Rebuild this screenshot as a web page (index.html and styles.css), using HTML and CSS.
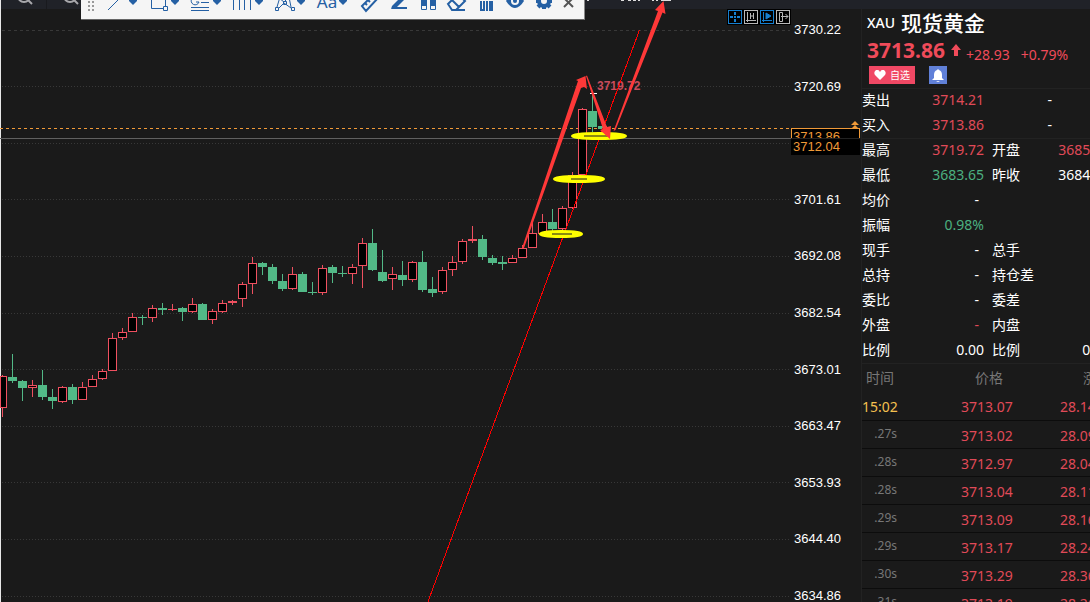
FILE: index.html
```html
<!DOCTYPE html>
<html lang="zh-CN">

<head>
    <meta charset="UTF-8">
    <meta name="viewport" content="width=device-width, initial-scale=1.0">
    <title>XAU 现货黄金</title>
    <link rel="stylesheet" href="styles.css">
</head>

<body>
    <header class="strip">
        <button type="button" aria-label="放大"><svg width="46" height="9"><circle cx="24" cy="-4" r="6" /><path d="M28 0l4 4" /></svg></button>
        <button type="button" aria-label="缩小"><svg width="46" height="9"><circle cx="23" cy="-4" r="6" /><path d="M27 0l4 4" /></svg></button>
        <svg class="strip_marks" width="90" height="9"><path d="M2 0h2M36 0h3M43 0h3M48 0h3M53 0h2M67 0h2M71 0h2M76 0h10" /></svg>
    </header>

    <div class="toolbar">
        <svg class="grip" width="22" height="24"><path d="M7 12h2M11 12h2M7 16h2M11 16h2M7 20h2M11 20h2" /></svg>
        <button type="button" aria-label="线段"><svg width="42" height="24"><path d="M5 20L19 6" /><path class="fill" d="M26 8h8v3l-4 4-4-4z" /></svg></button>
        <button type="button" aria-label="矩形"><svg width="42" height="24"><path d="M6.500 4v14.500h12M20.500 4v12M18.500 16.500h4v4h-4z" /><path class="fill" d="M26 8h8v3l-4 4-4-4z" /></svg></button>
        <button type="button" aria-label="黄金分割"><svg width="42" height="24"><path d="M11 8a4 4 0 1 0 1 4h-3M14 12.500h8M4 17.500h18M4 20.500h18" /><path class="fill" d="M26 8h8v3l-4 4-4-4z" /></svg></button>
        <button type="button" aria-label="周期线"><svg width="42" height="24"><path d="M4.500 4v16M10.500 4v16M15.500 4v16M21.500 4v16" /><path class="fill" d="M26 8h8v3l-4 4-4-4z" /></svg></button>
        <button type="button" aria-label="形态"><svg width="42" height="24"><path d="M6 17L9 7M20 17L18 7M8 18l5-5 7 5M8 8l5 4 5-5M4.500 17.500h3v3h-3zM20.500 17.500h3v3h-3zM12.500 11.500h3v3h-3z" /><path class="fill" d="M26 8h8v3l-4 4-4-4z" /></svg></button>
        <button type="button" class="text_tool" aria-label="文字"><span>Aa</span><svg width="20" height="24"><path class="fill" d="M4 8h8v3l-4 4-4-4z" /></svg></button>
        <button type="button" aria-label="测量"><svg class="bold" width="29" height="24"><path d="M7 16L19 4l4 4-12 13zM10 13l2 2M13 10l2 2M16 7l2 2" /></svg></button>
        <button type="button" aria-label="画笔"><svg width="29" height="24"><path class="fill" d="M8 16L20 4l3 3-11 11-5 1z" /><path class="thick" d="M8 18h15" /></svg></button>
        <button type="button" aria-label="布局"><svg width="29" height="24"><path d="M8.500 5v14.500h5V5M17.500 5v14.500h5V5" /><path class="fill" d="M8 4h6v12H8zM17 4h6v12h-6z" /></svg></button>
        <button type="button" aria-label="橡皮"><svg class="bold" width="29" height="24"><path d="M6 14L16 4l7 7-9 9h-4zM10 10l7 7M12 20h11" /></svg></button>
        <button type="button" aria-label="删除"><svg width="29" height="24"><path class="thick" d="M10 11v9h3v-9M16 11v10M22 20h-3v-9M21 11v10" /></svg></button>
        <button type="button" aria-label="显示"><svg width="29" height="24"><path class="fill" d="M6 11q9-14 18 0-9 14-18 0z" /><circle class="hole" cx="15" cy="11" r="4" /><circle class="fill" cx="15" cy="11" r="2" /></svg></button>
        <button type="button" aria-label="设置"><svg width="29" height="24"><circle class="gear" cx="15" cy="11" r="5" /><path class="cogs" d="M15 3v3M15 16v3M7 11h3M20 11h3M9 5l2 2M19 15l2 2M21 5l-2 2M11 15l-2 2" /></svg></button>
        <button type="button" class="close" aria-label="关闭"><svg width="26" height="24"><path d="M6 8l9 9M15 8l-9 9" /></svg></button>
    </div>

    <main>
        <section class="chart">
            <svg id="graph" viewBox="0 9 790 593" preserveAspectRatio="xMaxYMin meet" role="img" aria-label="K线图">
                <g id="grid"></g>
                <path class="current" d="M0 128.500H791" />
                <path class="cross" d="M0 138.500H791" />
                <g id="candles"></g>
                <path class="high_mark" d="M590 93.500h7" />
                <text class="high_text" x="597" y="90">3719.72</text>
                <path class="trend" d="M639.500 30L427.500 603" />
                <g class="levels">
                    <ellipse cx="599" cy="136" rx="26" ry="2" />
                    <ellipse cx="579" cy="179" rx="24" ry="2" />
                    <ellipse cx="561" cy="234" rx="20" ry="2" />
                    <path d="M584 136h25M571 179h16M552 234h20" />
                </g>
                <g class="arrows">
                    <path d="M522 248L578 81L576 80L585.500 76L587 89L584 87L581 88L524 248Z" />
                    <path d="M586 76L587 75.500L607 127L611 126L610 139L600 130L603 129Z" />
                    <path d="M613.500 131L658 11L655 10L663.500 1L665.500 14L662.500 12.500L615.500 130Z" />
                </g>
            </svg>
            <div class="chart_tools">
                <button type="button" class="blue" aria-label="十字光标"><svg width="14" height="14"><path class="plus" d="M7 2v3M7 9v3M2 7h3M9 7h3M6 7h2" /></svg></button>
                <button type="button" aria-label="坐标"><svg width="14" height="14"><path d="M3.500 2v10M2 10.500h10M6.500 3v6M9.500 3v6M7 6h3" /></svg></button>
                <button type="button" class="blue" aria-label="回放"><svg width="14" height="14"><path d="M3.500 2v10M2 10.500h10" /><path class="play" d="M6 3l5 3-5 3z" /></svg></button>
                <button type="button" aria-label="右移"><svg width="14" height="14"><path d="M3.500 2.500h3v9h-3zM5 6.500h7M9.500 4l2.500 2.500-2.500 2.500" /></svg></button>
            </div>
        </section>

        <aside class="axis">
            <ol>
                <li>3730.22</li>
                <li>3720.69</li>
                <li class="covered"></li>
                <li>3701.61</li>
                <li>3692.08</li>
                <li>3682.54</li>
                <li>3673.01</li>
                <li>3663.47</li>
                <li>3653.93</li>
                <li>3644.40</li>
                <li>3634.86</li>
            </ol>
            <div class="tag tag_price">3713.86</div>
            <div class="tag tag_cross">3712.04</div>
            <svg class="tag_arrow" width="8" height="8"><path d="M0 4l4-4 4 4zM0 8l4-4 4 4z" /></svg>
        </aside>

        <section class="quote">
            <h1><span>XAU</span> 现货黄金</h1>
            <div class="last">
                <strong>3713.86</strong>
                <svg width="10" height="12"><path d="M5 0l5 6H7v6H3V6H0z" /></svg>
                <span>+28.93</span>
                <span class="percent">+0.79%</span>
            </div>
            <div class="actions">
                <button type="button" class="favorite"><svg width="12" height="10"><path d="M6 10L1 5C-1 2 2-1 4 0q1 0 2 2 1-2 2-2c2-1 5 2 3 5z" /></svg>自选</button>
                <button type="button" class="alert" aria-label="提醒"><svg width="12" height="13"><path d="M6 0l1 1q3 1 3 5v3l2 2H0l2-2V6q0-4 3-5zM4 12h4l-2 1z" /></svg></button>
            </div>

            <table class="details">
                <colgroup><col class="c1"><col class="c2"><col class="c3"><col class="c4"></colgroup>
                <tbody>
                    <tr><th>卖出</th><td class="up">3714.21</td><td>-</td><td></td></tr>
                    <tr class="line"><th>买入</th><td class="up">3713.86</td><td>-</td><td></td></tr>
                    <tr><th>最高</th><td class="up">3719.72</td><th>开盘</th><td class="up">3685.20</td></tr>
                    <tr><th>最低</th><td class="down">3683.65</td><th>昨收</th><td>3684.93</td></tr>
                    <tr><th>均价</th><td class="empty">-</td><th></th><td></td></tr>
                    <tr><th>振幅</th><td class="down">0.98%</td><th></th><td></td></tr>
                    <tr><th>现手</th><td class="empty">-</td><th>总手</th><td></td></tr>
                    <tr><th>总持</th><td class="empty">-</td><th>持仓差</th><td></td></tr>
                    <tr><th>委比</th><td class="empty">-</td><th>委差</th><td></td></tr>
                    <tr><th>外盘</th><td class="empty up">-</td><th>内盘</th><td></td></tr>
                    <tr class="line"><th>比例</th><td>0.00</td><th>比例</th><td>0.00</td></tr>
                </tbody>
            </table>

            <table class="ticks">
                <colgroup><col class="t1"><col class="t2"><col class="t3"></colgroup>
                <thead>
                    <tr><th>时间</th><th>价格</th><th>涨跌</th></tr>
                </thead>
                <tbody>
                    <tr><td class="minute">15:02</td><td>3713.07</td><td>28.14</td></tr>
                    <tr><td>.27s</td><td>3713.02</td><td>28.09</td></tr>
                    <tr><td>.28s</td><td>3712.97</td><td>28.04</td></tr>
                    <tr><td>.28s</td><td>3713.04</td><td>28.11</td></tr>
                    <tr><td>.29s</td><td>3713.09</td><td>28.16</td></tr>
                    <tr><td>.29s</td><td>3713.17</td><td>28.24</td></tr>
                    <tr><td>.30s</td><td>3713.29</td><td>28.36</td></tr>
                    <tr><td>.31s</td><td>3713.19</td><td>28.26</td></tr>
                </tbody>
            </table>
        </section>
    </main>

    <script src="chart.js"></script>
</body>

</html>
```
FILE: styles.css
```css
* {
    box-sizing: border-box;
}

body {
    margin: 0;
    height: 100vh;
    display: flex;
    flex-direction: column;
    overflow: hidden;
    background-color: #1a1a1a;
    color: #fff;
    font-family: "Noto Sans", "Noto Sans CJK SC", sans-serif;
    font-size: 14px;
}

button {
    margin: 0;
    padding: 0;
    border: none;
    background: none;
    color: inherit;
    font: inherit;
    cursor: pointer;
}

svg {
    display: block;
    flex: none;
}

/* bandeau du haut */
.strip {
    display: flex;
    flex: none;
    height: 9px;
    overflow: hidden;
    background-color: #202228;
    box-shadow: inset 1px 0 #e8e8e8;
}

.strip button {
    border-right: 1px solid #191a1e;
}

.strip svg {
    fill: none;
    stroke: #a8a8ac;
    stroke-width: 2;
}

.strip .strip_marks {
    margin-left: 491px;
    stroke: #ddd;
}

/* barre d'outils flottante */
.toolbar {
    position: absolute;
    z-index: 3;
    top: -10px;
    left: 81px;
    display: flex;
    height: 30px;
    background-color: #f5f5f5;
    border-bottom: 1px solid #666;
    border-right: 1px solid #888;
}

.toolbar svg {
    fill: none;
    stroke: #2560a4;
}

.toolbar .grip {
    stroke: #999;
    stroke-width: 2;
}

.toolbar .fill {
    fill: #2560a4;
    stroke: none;
}

.toolbar .bold,
.toolbar .thick {
    stroke-width: 2;
}

.toolbar .hole {
    fill: #f5f5f5;
    stroke: none;
}

.toolbar .gear,
.toolbar .cogs {
    stroke-width: 4;
}

.toolbar .close svg {
    stroke: #555;
    stroke-width: 2;
}

.toolbar button {
    display: flex;
    align-items: flex-start;
}

.text_tool span {
    width: 22px;
    margin-left: 3px;
    margin-right: -3px;
    color: #2560a4;
    font-size: 17px;
    line-height: 24px;
}

main {
    display: grid;
    flex: 1;
    min-height: 0;
    grid-template-columns: minmax(0, 1fr) 71px 229px;
}

/* graphique */
.chart {
    position: relative;
    z-index: 2;
    box-shadow: inset 1px 0 #e8e8e8;
}

#graph {
    width: 100%;
    height: 100%;
    overflow: visible;
}

.grid_line {
    stroke: #383838;
    stroke-dasharray: 1 2;
}

.grid_line:first-child {
    stroke-dasharray: 3 3;
}

.current {
    stroke: #f09a38;
    stroke-dasharray: 3 3;
}

.cross {
    stroke: #606060;
}

.rise {
    fill: #000;
    stroke: #ef5060;
}

.fall {
    fill: #52b987;
    stroke: #52b987;
}

.high_mark {
    stroke: #fff;
}

.high_text {
    fill: #c84c5c;
    font-family: "Liberation Sans", sans-serif;
    font-size: 12px;
    font-weight: bold;
}

.trend {
    stroke: #f00;
    shape-rendering: crispEdges;
}

.levels ellipse {
    fill: #c8c800;
    stroke: #ff0;
    stroke-width: 4;
}

.levels path {
    stroke: #8c8c10;
    stroke-width: 2;
}

.arrows {
    fill: #ff3838;
}

.chart_tools {
    position: absolute;
    top: 0;
    right: -1px;
    display: flex;
    gap: 2px;
    padding: 1px;
    background-color: #000;
}

.chart_tools button {
    width: 14px;
    height: 14px;
    overflow: hidden;
    outline: 1px solid #b8b8b8;
    outline-offset: -1px;
}

.chart_tools .blue {
    outline-color: #1680d0;
}

.chart_tools svg {
    fill: none;
    stroke: #b8b8b8;
}

.chart_tools .blue svg {
    stroke: #1680d0;
}

.chart_tools .plus {
    stroke-width: 2;
}

.chart_tools .play {
    fill: #1680d0;
}

/* axe des prix */
.axis {
    position: relative;
    font-family: "Liberation Sans", sans-serif;
    font-size: 13px;
    line-height: 16px;
}

.axis ol {
    display: flex;
    flex-direction: column;
    justify-content: space-between;
    height: calc(100% + 2px);
    margin: 0;
    padding: 13px 0 0 4px;
    list-style: none;
}

.covered {
    height: 16px;
}

.tag {
    position: absolute;
    left: 1px;
    width: 69px;
    padding-left: 2px;
    background-color: #000;
    color: #f09a38;
}

.tag_price {
    top: 119px;
    border: 1px solid #f09a38;
    padding-left: 1px;
}

.tag_cross {
    top: 129px;
    height: 17px;
    border-top: 1px solid #222;
}

.tag_arrow {
    position: absolute;
    top: 112px;
    right: 2px;
    fill: #f09a38;
}

/* panneau des cotations */
.quote {
    min-width: 0;
    overflow: hidden;
    border-left: 1px solid #222;
}

h1 {
    display: flex;
    align-items: center;
    gap: 6px;
    height: 28px;
    margin: 0;
    padding-left: 5px;
    font-size: 21px;
    font-weight: 500;
    line-height: 26px;
    white-space: nowrap;
}

h1 span {
    font-size: 14px;
}

.last {
    display: flex;
    align-items: center;
    height: 26px;
    padding-left: 5px;
    color: #f04b5a;
    white-space: nowrap;
}

.last strong {
    font-size: 21px;
    line-height: 26px;
}

.last svg {
    margin: 0 5px 0 6px;
    fill: #f04b5a;
}

.last span {
    padding-top: 8px;
}

.last .percent {
    margin-left: 11px;
}

.actions {
    display: flex;
    gap: 14px;
    padding: 3px 0 4px 7px;
}

.actions button {
    display: flex;
    align-items: center;
    justify-content: center;
    gap: 4px;
    height: 18px;
    font-size: 10px;
    line-height: 18px;
}

.actions svg {
    fill: #fff;
}

.favorite {
    width: 46px;
    background-color: #f04864;
}

.alert {
    width: 18px;
    background-color: #6080d8;
}

table {
    border-collapse: collapse;
    table-layout: fixed;
    line-height: 20px;
    white-space: nowrap;
}

th,
td {
    padding: 0;
    font-weight: normal;
    text-align: left;
}

.details {
    width: 248px;
    border-top: 1px solid #222;
}

.details tr {
    height: 25px;
}

.details .line {
    border-bottom: 1px solid #222;
}

.details th,
.details td {
    padding-bottom: 2px;
}

.details td {
    text-align: right;
}

.details td:nth-child(2) {
    padding-right: 8px;
}

.details td.empty:nth-child(2) {
    padding-right: 13px;
}

.c1 {
    width: 50px;
}

.c2 {
    width: 80px;
}

.c3 {
    width: 60px;
}

.c4 {
    width: 58px;
}

.up {
    color: #e04a58;
}

.down {
    color: #4cb080;
}

.ticks {
    width: 290px;
    color: #e04a58;
}

.ticks tr {
    height: 28px;
}

.ticks tbody tr {
    border-bottom: 1px solid #0c0c0c;
}

.ticks th {
    padding-left: 4px;
    color: #777;
}

.ticks th:nth-child(2) {
    padding-left: 14px;
}

.ticks th:nth-child(3) {
    padding-left: 23px;
}

.ticks td {
    padding-top: 3px;
}

.ticks td:first-child {
    padding: 0 64px 0 0;
    color: #777;
    font-size: 12px;
    text-align: right;
}

.ticks td.minute:first-child {
    padding-top: 3px;
    color: #f4c050;
    font-size: 14px;
}

.t1 {
    width: 99px;
}

.t2 {
    width: 99px;
}
```
FILE: chart.js
```js
// type, plus haut, haut du corps, bas du corps, plus bas
const candles = [
    ['r', 375, 376, 408, 417], ['g', 354, 377, 381, 383], ['g', 380, 381, 388, 401],
    ['r', 380, 385, 388, 397], ['g', 370, 385, 397, 400], ['g', 389, 397, 401, 409],
    ['r', 386, 387, 402, 403], ['g', 384, 387, 400, 404], ['r', 382, 387, 400, 400],
    ['r', 375, 379, 387, 387], ['r', 369, 371, 379, 380], ['r', 333, 338, 371, 371],
    ['r', 328, 332, 338, 340], ['r', 313, 317, 332, 332], ['g', 315, 317, 318, 325],
    ['r', 305, 308, 318, 322], ['g', 303, 308, 310, 315], ['r', 304, 309, 310, 311],
    ['g', 307, 308, 312, 321], ['r', 298, 304, 312, 313], ['g', 303, 304, 320, 320],
    ['r', 309, 311, 320, 324], ['r', 300, 303, 312, 313], ['r', 300, 301, 303, 305],
    ['r', 282, 284, 299, 307], ['r', 257, 263, 284, 294], ['g', 262, 263, 267, 275],
    ['g', 264, 267, 281, 284], ['g', 274, 281, 289, 291], ['r', 267, 274, 289, 290],
    ['g', 272, 274, 292, 292], ['g', 282, 292, 293, 295], ['r', 265, 268, 293, 295],
    ['g', 265, 267, 273, 283], ['g', 266, 273, 274, 277], ['r', 264, 267, 274, 284],
    ['r', 238, 243, 266, 288], ['g', 229, 243, 270, 271], ['g', 250, 272, 281, 282],
    ['r', 267, 274, 279, 290], ['g', 261, 275, 280, 286], ['r', 261, 262, 280, 282],
    ['g', 251, 262, 290, 292], ['g', 277, 289, 293, 297], ['r', 267, 270, 292, 294],
    ['r', 256, 262, 270, 276], ['r', 239, 241, 262, 264], ['r', 226, 239, 241, 243],
    ['g', 235, 239, 257, 260], ['g', 255, 258, 263, 265], ['g', 256, 262, 264, 270],
    ['r', 255, 258, 263, 263], ['r', 245, 248, 258, 258], ['r', 222, 233, 248, 248],
    ['r', 214, 222, 234, 234], ['g', 209, 222, 229, 231], ['r', 206, 208, 229, 231],
    ['r', 172, 175, 208, 209], ['r', 108, 109, 175, 175], ['g', 93, 111, 127, 132],
    ['g', 125, 126, 129, 129]
];

let grid = '';
for (let i = 0; i < 11; i++) {
    const y = Math.floor(30 + i * 56.6) + 0.5;
    grid += `<path class="grid_line" d="M2 ${y}H790" />`;
}
document.getElementById('grid').innerHTML = grid;

let bars = '';
candles.forEach(([type, high, top, bottom, low], index) => {
    const x = 2 + index * 10;
    // la première bougie est coupée par le bord gauche
    const left = Math.max(x - 4, 0);
    bars += `<g class="${type === 'r' ? 'rise' : 'fall'}">
                <path d="M${x + 0.5} ${high}V${low}" />
                <rect x="${left + 0.5}" y="${top + 0.5}" width="${x + 4 - left}" height="${Math.max(bottom - top - 1, 0.01)}" />
            </g>`;
});
document.getElementById('candles').innerHTML = bars;
```
